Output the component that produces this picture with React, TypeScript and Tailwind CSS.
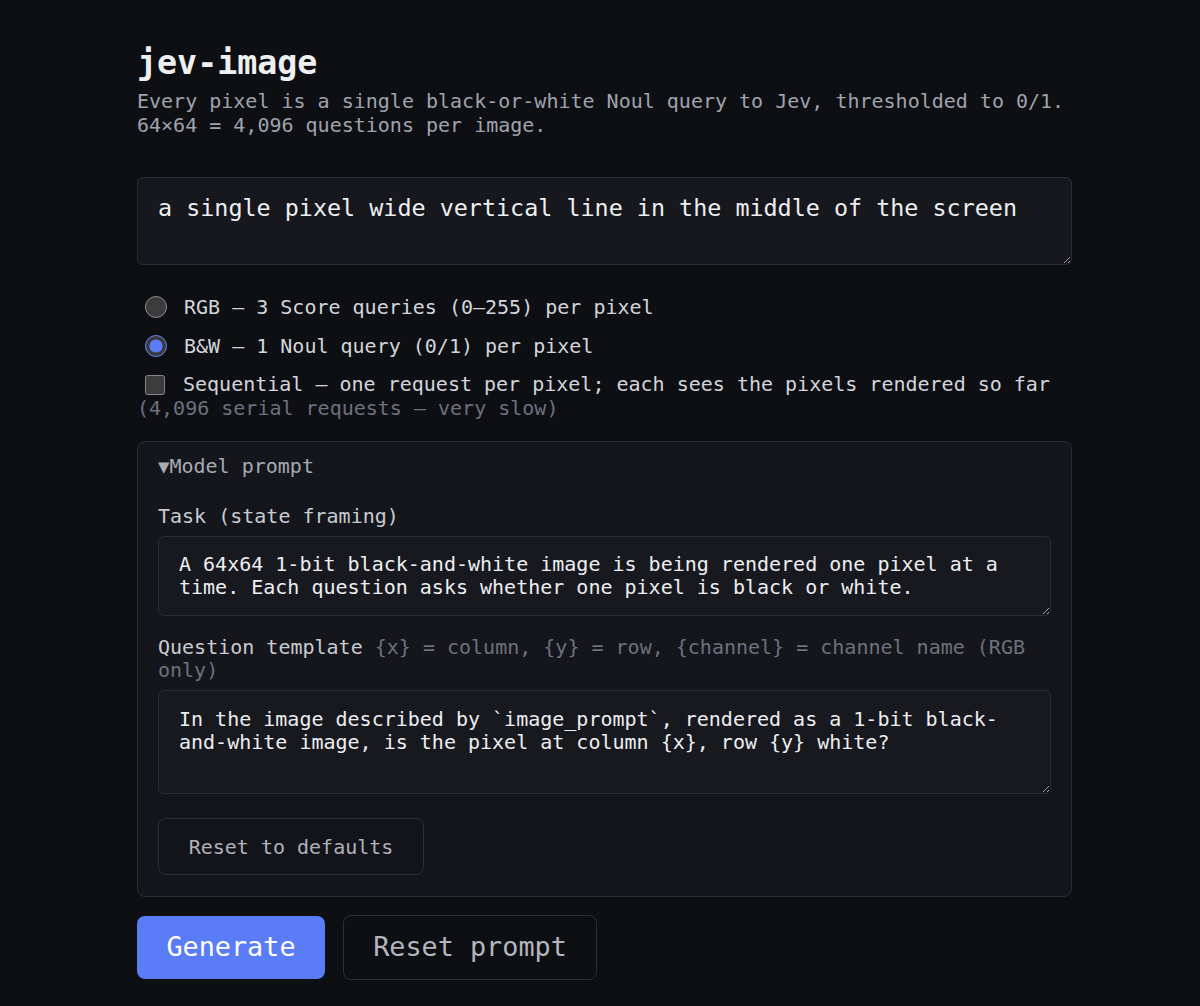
import React from "react";

export default function App() {
  return (
    <div className="min-h-screen bg-[#0e0f13] font-['DejaVu_Sans_Mono',monospace] [color-scheme:dark]">
      <div className="ml-[137px] w-[935px] pt-[43px] pb-[26px]">
        <h1 className="text-[33.3px] leading-[40px] font-bold text-[#eeeff1]">jev-image</h1>
        <p className="mt-[6px] text-[20px] leading-[24px] text-[#9ea3ae]">
          Every pixel is a single black-or-white Noul query to Jev, thresholded to 0/1.
          <br />
          64×64 = 4,096 questions per image.
        </p>

        <textarea
          className="mt-[40px] block w-full h-[88px] rounded-[6px] border border-[#2b2d36] bg-[#17181d] px-[20px] pt-[15px] text-[23.4px] leading-[30px] text-[#eceef1] outline-none"
          defaultValue="a single pixel wide vertical line in the middle of the screen"
        />

        <div className="mt-[30px] flex flex-col gap-[15px] text-[20px] leading-[24px] text-[#d2d5dc]">
          <label className="flex items-center h-[24px]">
            <input type="radio" name="mode" className="ml-[8px] mr-[17px] m-0 w-[22px] h-[22px] accent-[#5b7cf8]" />
            <span>RGB — 3 Score queries (0–255) per pixel</span>
          </label>
          <label className="flex items-center h-[24px]">
            <input type="radio" name="mode" defaultChecked className="ml-[8px] mr-[17px] m-0 w-[22px] h-[22px] accent-[#5b7cf8]" />
            <span>B&amp;W — 1 Noul query (0/1) per pixel</span>
          </label>
          <label className="block -mt-[1px]">
            <input type="checkbox" className="ml-[8px] mr-[18px] w-[20px] h-[20px] align-[-4px] accent-[#5b7cf8]" />
            Sequential — one request per pixel; each sees the pixels rendered so far{" "}
            <span className="text-[#6c717e]">(4,096 serial requests — very slow)</span>
          </label>
        </div>

        <div className="mt-[21px] rounded-[8px] border border-[#2a2c35] bg-[#15161c] px-[20px] pt-[12px] pb-[21px]">
          <div className="text-[20px] leading-[24px] text-[#a6aab3]">
            <span className="text-[19px]">▼</span>Model prompt
          </div>

          <div className="mt-[26px] text-[20px] leading-[24px] text-[#c8cbd2]">Task (state framing)</div>
          <textarea
            className="mt-[8px] block w-full h-[80px] rounded-[6px] border border-[#2b2d36] bg-[#18191f] px-[20px] pt-[16px] text-[20px] leading-[23px] text-[#eceef1] outline-none"
            defaultValue="A 64x64 1-bit black-and-white image is being rendered one pixel at a time. Each question asks whether one pixel is black or white."
          />

          <p className="mt-[20px] text-[20px] leading-[23px] text-[#6c717e]">
            <span className="text-[#c8cbd2]">Question template</span> {"{x} = column, {y} = row, {channel} = channel name (RGB only)"}
          </p>
          <textarea
            className="mt-[8px] block w-full h-[104px] rounded-[6px] border border-[#2b2d36] bg-[#18191f] px-[20px] pt-[17px] text-[20px] leading-[23px] text-[#eceef1] outline-none"
            defaultValue="In the image described by `image_prompt`, rendered as a 1-bit black-and-white image, is the pixel at column {x}, row {y} white?"
          />

          <button className="mt-[24px] block w-[266px] h-[57px] rounded-[8px] border border-[#2c2e37] bg-[#131419] text-[20px] text-[#aeb1b9]">
            Reset to defaults
          </button>
        </div>

        <div className="mt-[18px] flex items-center gap-[18px]">
          <button className="w-[188px] h-[63px] rounded-[8px] bg-[#5a7cf7] text-[26.8px] text-white">Generate</button>
          <button className="w-[254px] h-[65px] rounded-[8px] border border-[#2c2e37] bg-[#0e0f13] text-[26.8px] text-[#b3b6be]">
            Reset prompt
          </button>
        </div>
      </div>
    </div>
  );
}
